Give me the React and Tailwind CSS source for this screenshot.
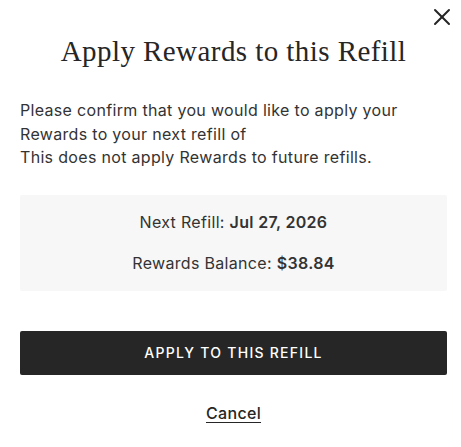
import { X } from 'lucide-react';

export default function App() {
  return (
    <div className="w-[461px] h-[447px] bg-white relative" style={{ fontFamily: 'Inter, "Noto Sans", sans-serif' }}>
      <button className="absolute top-[3px] left-[428px] text-[#262626]">
        <X className="w-[28px] h-[28px]" strokeWidth={1.7} />
      </button>
      <div className="pl-5 pr-[14px] pt-[31px]">
        <h1 className="text-center text-[29px] leading-[40px] tracking-[0.015em] text-[#262626]" style={{ fontFamily: '"Liberation Serif", "DejaVu Serif", serif' }}>
          Apply Rewards to this Refill
        </h1>
        <p className="mt-[28px] text-[16px] leading-[23.5px] tracking-[0.02em] text-[#333]">
          Please confirm that you would like to apply your<br />
          Rewards to your next refill of<br />
          This does not apply Rewards to future refills.
        </p>
        <div className="mt-[25px] h-[96px] bg-[#f7f7f7] rounded-[2px] flex flex-col items-center justify-center gap-[17px] text-[16px] tracking-[0.02em] text-[#333]">
          <div>Next Refill: <span className="font-semibold">Jul 27, 2026</span></div>
          <div>Rewards Balance: <span className="font-semibold">$38.84</span></div>
        </div>
        <button className="mt-[40px] w-full h-[44px] bg-[#262626] rounded-[2px] text-white text-[14px] tracking-[0.09em] font-medium">
          APPLY TO THIS REFILL
        </button>
        <div className="mt-[26px] text-center">
          <a className="text-[16px] tracking-[0.02em] font-medium text-[#262626] underline underline-offset-[3px]">Cancel</a>
        </div>
      </div>
    </div>
  );
}
